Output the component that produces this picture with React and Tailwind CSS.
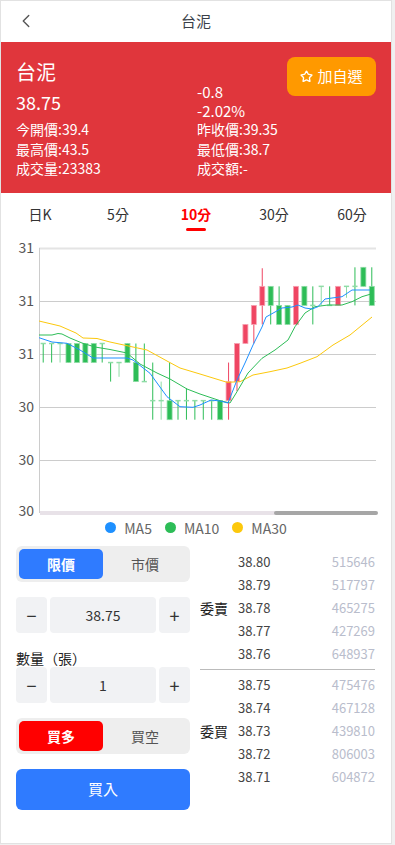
import React, { useState } from "react";
import { ChevronLeft, Star } from "lucide-react";

const LV = (k) => 267.3 + 19.05 * k;
const SLOT = 337 / 40;

// [bodyTop, bodyBottom, wickTop, wickBottom, color]
const candles = [
  [4, 4, 4, 5, "g"], [4, 4, 4, 5, "g"], [4, 4, 4, 5, "lg"], [4, 5, 4, 5, "g"],
  [4, 5, 4, 5, "g"], [4, 5, 4, 5, "g"], [4, 5, 4, 5, "g"], [4, 4, 4, 5, "g"],
  [5, 5, 5, 6, "g"], [5, 5, 5, 5.75, "lg"], [4, 5, 4, 5, "g"], [5, 6, 4, 6, "g"],
  [6, 6, 4, 6, "g"], [7, 7, 5, 8, "g"], [7, 7, 6, 8, "lg"], [7, 8, 5, 8, "g"],
  [7, 7, 7, 8, "g"], [7, 7, 6.35, 8, "g"], [7, 7, 7, 8, "g"], [7, 7, 7, 8, "g"],
  [7, 7, 7, 8, "g"], [7, 8, 7, 8, "g"], [6, 7, 5, 8, "r"], [4, 6, 4, 6.5, "r"],
  [3, 4, 3, 4, "r"], [2, 3, 2, 4, "r"], [1, 2, 0.05, 3, "r"], [1, 2, 1, 3, "g"],
  [2, 3, 1, 3, "g"], [2, 3, 2, 3, "g"], [1, 3, 1, 3, "r"], [1, 2, 1, 2, "g"],
  [2, 2, 1, 3, "g"], [1, 1, 1, 2, "lg"], [2, 2, 1, 2, "g"], [1, 2, 1, 2, "r"],
  [1, 1, 1, 1.6, "lg"], [1, 1, 0, 2, "g"], [0, 1, 0, 1, "g"], [1, 2, 0, 2, "g"],
];

const colors = {
  g: { main: "#2dbd57", light: "#8fdca6" },
  lg: { main: "#8fdca6", light: "#8fdca6" },
  r: { main: "#ef4663", light: "#f7a3b3" },
};

const ma5 =
  "39,337.7 52,342 67,343.3 80,350 93,358 127,358 133,360 150,373.3 167,396.7 180,406.7 193,407.3 200,405 211,400 220,401 228,403 237,380 245,363 253,345 262,327 266,317 275,312 282,308 292,307 298,305 305,308 312,309 318,306.7 325,299 332,298 342,296.7 352,290 370,290";
const ma10 =
  "39,335 52,335 58,333.5 62,334 70,338 82,343 95,347 110,349.5 127,353 140,364 157,373 170,379 187,389 200,394 220,400.7 230,403 237,391.7 248,373 262,358.3 275,350 288,340 295,326.7 305,313 315,306.7 328,305 342,305 352,301.7 362,296.7 370,294.3";
const ma30 =
  "39,321 60,326 76,333 83,338 97,338.5 110,342 133,347 147,350 167,361 180,368 200,374 213,378 227,382.3 240,381.7 253,375 270,371.7 287,368 300,363.3 317,356.7 333,345 350,335 372,317";

const asks = [
  ["38.80", "515646"],
  ["38.79", "517797"],
  ["38.78", "465275"],
  ["38.77", "427269"],
  ["38.76", "648937"],
];
const bids = [
  ["38.75", "475476"],
  ["38.74", "467128"],
  ["38.73", "439810"],
  ["38.72", "806003"],
  ["38.71", "604872"],
];

function KChart() {
  const grid = [301, 354, 407, 460];
  const labels = [
    [248, "31"], [301, "31"], [354, "31"], [407, "30"], [460, "30"], [511, "30"],
  ];
  return (
    <svg className="block" width="390" height="284" viewBox="1 235 390 284">
      <line x1="39" y1="248.5" x2="376" y2="248.5" stroke="#e4e4e4" strokeWidth="2" />
      {grid.map((y) => (
        <line key={y} x1="39" y1={y + 0.5} x2="376" y2={y + 0.5} stroke="#cccccc" strokeWidth="1" />
      ))}
      <line x1="39.5" y1="248" x2="39.5" y2="513" stroke="#cccccc" strokeWidth="1" />
      {labels.map(([y, t], i) => (
        <text key={i} x="34" y={y + 5} textAnchor="end" fontSize="14" fill="#555">
          {t}
        </text>
      ))}
      {candles.map(([bt, bb, wt, wb, c], i) => {
        const cx = 39 + (i + 0.5) * SLOT;
        const col = colors[c];
        return (
          <g key={i}>
            <line x1={cx} y1={LV(wt)} x2={cx} y2={LV(wb)} stroke={col.main} strokeWidth="1" />
            {bt === bb ? (
              <line x1={cx - 2.6} y1={LV(bt)} x2={cx + 2.6} y2={LV(bt)} stroke={col.light} strokeWidth="1.5" />
            ) : (
              <rect
                x={cx - 2.5}
                y={LV(bt)}
                width="5"
                height={LV(bb) - LV(bt)}
                fill={col.main}
                stroke={col.light}
                strokeWidth="0.8"
              />
            )}
          </g>
        );
      })}
      <polyline points={ma30} fill="none" stroke="#fcc80c" strokeWidth="1" />
      <polyline points={ma10} fill="none" stroke="#2dbd57" strokeWidth="1" />
      <polyline points={ma5} fill="none" stroke="#1e90ff" strokeWidth="1" />
      <line x1="40" y1="513" x2="376" y2="513" stroke="#e8e2e8" strokeWidth="4" />
      <line x1="276" y1="513" x2="376" y2="513" stroke="#a6a6a6" strokeWidth="4" strokeLinecap="round" />
    </svg>
  );
}

function Stepper({ value }) {
  return (
    <div className="flex h-9 gap-[3px]">
      <button type="button" className="flex w-[31px] items-center justify-center rounded bg-[#f1f2f4] text-lg text-[#333]">
        −
      </button>
      <div className="flex flex-1 items-center justify-center rounded bg-[#f1f2f4] text-sm text-[#333]">
        {value}
      </div>
      <button type="button" className="flex w-[31px] items-center justify-center rounded bg-[#f1f2f4] text-lg text-[#333]">
        +
      </button>
    </div>
  );
}

function Segment({ options, active, activeClass }) {
  return (
    <div className="flex h-9 rounded-md bg-[#eeeeee] p-[3px]">
      {options.map((o, i) => (
        <div
          key={o}
          className={`flex flex-1 items-center justify-center rounded-[5px] text-sm ${
            i === active ? `${activeClass} font-bold text-white` : "text-[#555]"
          }`}
        >
          {o}
        </div>
      ))}
    </div>
  );
}

function BookBlock({ label, rows }) {
  return (
    <div className="flex items-center">
      <div className="w-[38px] text-sm text-[#222]">{label}</div>
      <div className="flex-1">
        {rows.map(([p, v]) => (
          <div key={p} className="flex h-[23px] items-center justify-between text-[13px]">
            <span className="text-[#444]">{p}</span>
            <span className="text-[#b9bdcc]">{v}</span>
          </div>
        ))}
      </div>
    </div>
  );
}

export default function App() {
  const [tab, setTab] = useState(2);
  const tabs = ["日K", "5分", "10分", "30分", "60分"];

  return (
    <div className="min-h-screen bg-[#f0f0f0] font-['Noto_Sans_CJK_TC','Noto_Sans',sans-serif]">
      <div className="h-[844px] w-[392px] border border-[#e2e2e2] bg-white">
        {/* header */}
        <div className="relative flex h-[41px] items-center justify-center">
          <ChevronLeft className="absolute left-[14px] top-[9px] h-[22px] w-[22px] text-[#555]" strokeWidth={1.5} />
          <span className="text-[15px] text-[#3a3f4a]">台泥</span>
        </div>

        {/* quote panel */}
        <div className="h-[151px] bg-[#e0363c] px-[15px] pt-[17px] text-white">
          <div className="flex">
            <div className="w-[181px] pb-[6px]">
              <div className="text-xl leading-[26px]">台泥</div>
              <div className="mt-[5px] text-lg leading-[24px]">38.75</div>
            </div>
            <div className="flex w-[90px] flex-col justify-end text-[15px] leading-[19px]">
              <div>-0.8</div>
              <div>-2.02%</div>
            </div>
            <button
              type="button"
              className="ml-auto mt-[-2px] flex h-[39px] w-[89px] items-center justify-center gap-1 rounded-lg bg-[#ff9900] text-[15px] text-white"
            >
              <Star className="h-[13px] w-[13px]" strokeWidth={2.5} />
              加自選
            </button>
          </div>
          <div className="grid grid-cols-[181px_1fr] text-sm leading-[19.5px]">
            <div>今開價:39.4</div>
            <div>昨收價:39.35</div>
            <div>最高價:43.5</div>
            <div>最低價:38.7</div>
            <div>成交量:23383</div>
            <div>成交額:-</div>
          </div>
        </div>

        {/* tabs */}
        <div className="grid h-[42px] grid-cols-5">
          {tabs.map((t, i) => (
            <button
              key={t}
              type="button"
              onClick={() => setTab(i)}
              className={`relative flex items-center justify-center text-sm ${
                i === tab ? "font-bold text-[#ff0000]" : "text-[#333]"
              }`}
            >
              {t}
              {i === tab ? (
                <span className="absolute bottom-[4px] left-1/2 h-[3px] w-5 -translate-x-1/2 rounded-full bg-[#ff0000]" />
              ) : null}
            </button>
          ))}
        </div>

        {/* chart */}
        <KChart />
        <div className="flex h-[17px] items-center justify-center gap-[13px] text-sm text-[#666]">
          <div className="flex items-center gap-[8px]">
            <span className="h-[11px] w-[11px] rounded-full bg-[#1e90ff]" />
            MA5
          </div>
          <div className="flex items-center gap-[8px]">
            <span className="h-[11px] w-[11px] rounded-full bg-[#2dbd57]" />
            MA10
          </div>
          <div className="flex items-center gap-[8px]">
            <span className="h-[11px] w-[11px] rounded-full bg-[#fcc80c]" />
            MA30
          </div>
        </div>

        {/* order */}
        <div className="mt-[10px] flex gap-[10px] pl-[15px] pr-[16px]">
          <div className="w-[174px]">
            <Segment options={["限價", "市價"]} active={0} activeClass="bg-[#2f7bff]" />
            <div className="mt-[15px]">
              <Stepper value="38.75" />
            </div>
            <div className="mt-[17px] text-sm leading-[17px] text-[#222]">數量（張）</div>
            <Stepper value="1" />
            <div className="mt-[15px]">
              <Segment options={["買多", "買空"]} active={0} activeClass="bg-[#ff0000]" />
            </div>
            <button
              type="button"
              className="mt-[15px] flex h-[41px] w-full items-center justify-center rounded-md bg-[#2f7bff] text-[15px] text-white"
            >
              買入
            </button>
          </div>
          <div className="flex-1 pt-[4px]">
            <BookBlock label="委賣" rows={asks} />
            <div className="my-[3.5px] border-t border-[#bbbbbb]" />
            <BookBlock label="委買" rows={bids} />
          </div>
        </div>
      </div>
    </div>
  );
}
